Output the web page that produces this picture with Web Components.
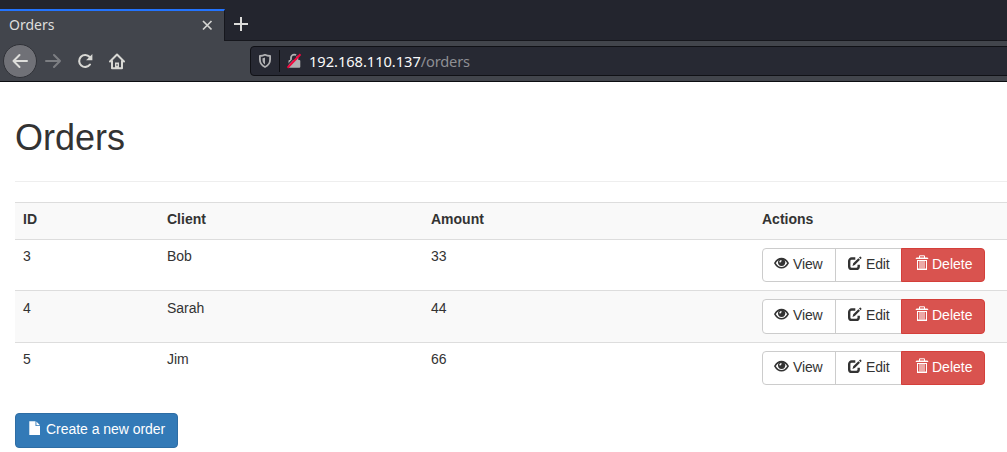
<!DOCTYPE html>
<html lang="en">
<head>
<meta charset="utf-8">
<title>Orders</title>
<style>
html,body{margin:0;height:100%;overflow:hidden;background:#fff}
body{font:14px/20px "Liberation Sans",Arial,sans-serif;color:#333}
</style>
</head>
<body>
<browser-chrome></browser-chrome>
<orders-page></orders-page>
<script>
function define(name, html) {
  const t = document.createElement('template');
  t.innerHTML = html;
  customElements.define(name, class extends HTMLElement {
    constructor() {
      super();
      this.attachShadow({mode: 'open'}).append(t.content.cloneNode(true));
    }
  });
}

const glyphs = {
  eye: '<path d="M.9 7.200C2.500 4.300 4.800 2.600 7.500 2.600S12.500 4.300 14.100 7.200c-1.600 2.900-3.900 4.600-6.600 4.600S2.500 10.100.9 7.200z" fill="none" stroke="currentColor" stroke-width="1.600"/><circle cx="7.600" cy="6.300" r="3.600"/><path d="M5.300 6.300c0-1.300.7-2.200 2.100-2.300l.2 1.300c-.6.1-.9.500-1 1.200z" fill="#fff"/>',
  edit: '<path d="M8.300 2.500H4.700A2.500 2.500 0 0 0 2.200 5v5.400A2.500 2.500 0 0 0 4.700 12.900h4.500a2.500 2.500 0 0 0 2.500-2.500V8.700" fill="none" stroke="currentColor" stroke-width="2.400"/><path d="m5.500 9.900.7-2.600 5.200-5.100 1.600 1.600-5.200 5.200zM12 1.600l.9-.9c.3-.3.500-.2.700 0l.8.8c.3.300.3.500 0 .8l-.9.9z"/>',
  trash: '<path fill="none" stroke="currentColor" d="M.8 3.500h12.400M4.500 3V.8h5V3M2.500 5v9.500h9V5M5 5.500v8M7 5.500v8M9 5.500v8"/><path d="M1.500 2.500h11L13.200 4H.8zM2 5h10v1H2zM2 13.500h10V15H2z"/>',
  file: '<path d="M1.300.2h6.200v4.900h4.500v8.900H1.300zM8.400.4l3.600 3.800H8.400z"/>'
};
customElements.define('glyph-icon', class extends HTMLElement {
  constructor() {
    super();
    this.attachShadow({mode: 'open'}).innerHTML =
      '<style>:host{display:block;width:15px;height:15px;margin:2px 4px 0 0}:host([name=trash]){margin-right:2px;margin-top:1px}:host([name=file]){margin-right:3px}svg{display:block;fill:currentColor}</style>' +
      '<svg width="15" height="15" viewBox="0 0 15 15">' + glyphs[this.getAttribute('name')] + '</svg>';
  }
});

define('app-button', `<style>
:host{display:flex;box-sizing:border-box;height:34px;padding:5px 11px;border:1px solid #ccc;background:#fff;color:#333;line-height:20px;white-space:nowrap;align-items:flex-start}
:host([kind=danger]){background:#d9534f;border-color:#d43f3a;color:#fff}
:host([kind=primary]){background:#337ab7;border-color:#2e6da4;color:#fff;border-radius:4px;width:163px;height:35px;padding-left:12px;letter-spacing:-.04px}
</style><slot></slot>`);

define('order-actions', `<style>
:host{display:flex;height:var(--button-height,34px)}
app-button{height:100%}
app-button:nth-child(2){width:74px;border-radius:4px 0 0 4px;letter-spacing:-.15px}
app-button:nth-child(3){width:67px;margin-left:-1px;letter-spacing:-.15px}
app-button:nth-child(4){width:84px;margin-left:-1px;border-radius:0 4px 4px 0;padding-left:13px}
</style>
<app-button><glyph-icon name="eye"></glyph-icon>View</app-button>
<app-button><glyph-icon name="edit"></glyph-icon>Edit</app-button>
<app-button kind="danger"><glyph-icon name="trash"></glyph-icon>Delete</app-button>`);

define('order-row', `<style>
:host{display:grid;box-sizing:border-box;grid-template-columns:144px 264px 331px 1fr;border-top:1px solid #ddd;padding:6px 0 0 8px;height:var(--row-height,51px);align-items:start}
:host([striped]){background:#f9f9f9}
:host([header]){font-weight:bold;height:37px}
::slotted(order-actions){margin-top:var(--action-offset,2px)}
</style><slot></slot>`);

define('orders-page', `<style>
:host{display:block;padding:36px 0 0 15px}
h1{font-size:36px;line-height:40px;font-weight:400;margin:0 0 23px}
hr{border:0;border-top:1px solid #eee;margin:0 0 20px}
section{height:211px}
order-row.tall{padding-top:7px;--row-height:52px;--button-height:35px;--action-offset:1px}
</style>
<h1>Orders</h1><hr>
<section>
<order-row header striped><span>ID</span><span>Client</span><span>Amount</span><span>Actions</span></order-row>
<order-row><span>3</span><span>Bob</span><span>33</span><order-actions></order-actions></order-row>
<order-row class="tall" striped><span>4</span><span>Sarah</span><span>44</span><order-actions></order-actions></order-row>
<order-row><span>5</span><span>Jim</span><span>66</span><order-actions></order-actions></order-row>
</section>
<app-button kind="primary"><glyph-icon name="file"></glyph-icon>Create a new order</app-button>`);

define('browser-tab', `<style>
:host{display:flex;box-sizing:border-box;width:225px;height:33px;border-top:2px solid #2374ff;border-right:1px solid #16171d;background:#42454c;color:#dededd;padding:0 11px 0 9px;align-items:center;justify-content:space-between;font-size:14px}
svg{display:block;margin-top:-2px}
span{margin-top:-2px}
</style><span><slot></slot></span>
<svg width="11" height="11" viewBox="0 0 11 11"><path d="m1 1 8.500 8.500M9.500 1 1 9.500" fill="none" stroke="#d5d5d2" stroke-width="1.7"/></svg>`);

define('address-bar', `<style>
:host{display:flex;box-sizing:border-box;width:780px;height:30px;border:1px solid #101116;border-radius:4px;background:#272933;align-items:center;color:#fafafa;font-size:14.667px;padding-left:7px}
i{width:1px;height:22px;background:#0d0e12;margin:0 6px 0 7px}
svg{display:block}
.lock{margin-right:7px}
b{font-weight:400;color:#8e8f93;letter-spacing:-.2px}
span{white-space:nowrap;line-height:20px;letter-spacing:-.04px}
</style>
<svg width="14" height="16" viewBox="0 0 14 16"><path d="M7 1.800c1.500.8 3.200 1.200 5.100 1.200v3.500c0 3.400-1.700 5.900-5.100 7.500C3.600 12.400 1.900 9.900 1.900 6.500V3C3.800 3 5.500 2.600 7 1.800z" fill="none" stroke="#b1b1b3" stroke-width="1.800" stroke-linejoin="round"/><path d="M7 4.500v7C5.200 10.300 4.500 8.700 4.500 6.700V5.200C5.400 5.100 6.200 4.900 7 4.500z" fill="#b1b1b3"/></svg>
<i></i>
<svg class="lock" width="16" height="16" viewBox="0 0 16 16"><path d="M5 7.500V4.800a3.200 3.200 0 0 1 6.400 0v2.700" fill="none" stroke="#b1b1b3" stroke-width="1.800"/><rect x="2.500" y="7" width="11.800" height="7.800" rx="1" fill="#b1b1b3"/><path d="m.5 13.200 12-12.700" stroke="#272933" stroke-width="1.200"/><path d="m1.500 14.800 13-13.600" stroke="#f0083e" stroke-width="2"/></svg>
<span>192.168.110.137<b>/orders</b></span>`);

define('browser-chrome', `<style>
:host{display:block;font-family:"Noto Sans",sans-serif}
.tabs{display:flex;box-sizing:border-box;height:41px;padding-top:8px;background:linear-gradient(#16171d,#16171d) 225px 40px/100% 1px no-repeat #23252e}
browser-tab{margin-top:1px;height:32px}
.plus{margin:8px 0 0 8px}
.bar{display:flex;box-sizing:border-box;height:41px;background:#42454c;border-bottom:1px solid #0c0d11;align-items:center;padding-left:3px;overflow:hidden}
svg{display:block;flex:none}
.back{display:flex;flex:none;box-sizing:border-box;width:34px;height:34px;border-radius:50%;border:1px solid #303238;background:#707177;align-items:center;justify-content:center}
.fwd{margin-left:8px}.reload{margin-left:16px}.home{margin-left:14px}
address-bar{margin-left:124px;flex:none}
</style>
<div class="tabs"><browser-tab>Orders</browser-tab>
<svg class="plus" width="16" height="16" viewBox="0 0 16 16"><path d="M8 1v14M1 8h14" stroke="#dcdcda" stroke-width="2"/></svg></div>
<div class="bar"><div class="back"><svg width="16" height="16" viewBox="0 0 16 16"><path d="M15 8H1.500M7.500 2l-6 6 6 6" fill="none" stroke="#dededb" stroke-width="2" stroke-linejoin="round" stroke-linecap="round"/></svg></div>
<svg class="fwd" width="16" height="16" viewBox="0 0 16 16"><path d="M1 8h14M9 2l6 6-6 6" fill="none" stroke="#7c7e82" stroke-width="2" stroke-linejoin="round" stroke-linecap="round"/></svg>
<svg class="reload" width="17" height="16" viewBox="0 0 17 16"><path d="M12.700 4A6 6 0 1 0 13 11.500" fill="none" stroke="#d8d8d4" stroke-width="2.100" stroke-linecap="round"/><path d="M15.400 1v6.300H9.100z" fill="#d8d8d4"/></svg>
<svg class="home" width="18" height="17" viewBox="0 0 18 17"><path d="m2 8.500 7-7 7 7M4 8v7.200h10V8" fill="none" stroke="#d8d8d4" stroke-width="2" stroke-linejoin="round" stroke-linecap="round"/><path d="M7 15V9.500h4V15z" fill="#d8d8d4"/><path d="M8.500 11h1v2h-1z" fill="#42454c"/></svg>
<address-bar></address-bar></div>`);
</script>
</body>
</html>
